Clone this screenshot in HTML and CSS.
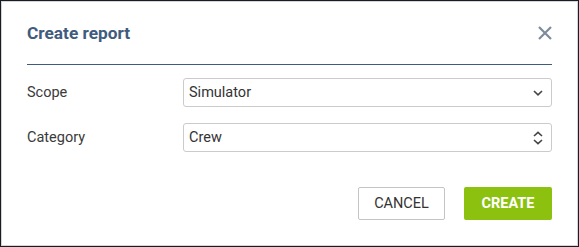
FILE: index.html
```html
<!DOCTYPE html>
<html lang="en">
<head>
  <meta charset="UTF-8">
  <meta name="viewport" content="width=device-width, initial-scale=1.0">
  <title>Create report</title>
  <link rel="stylesheet" href="styles.css">
</head>
<body>
  <div id="dialog">
    <div class="dialog-header">
      <h1>Create report</h1>
      <a href="#" class="close" aria-label="Close">
        <svg width="16" height="16" viewBox="0 0 16 16"><path d="M2 2 L14 14 M14 2 L2 14" stroke="#7d8b9c" stroke-width="2.2" fill="none"/></svg>
      </a>
    </div>

    <div class="dialog-body">
      <div class="field">
        <label for="scope">Scope</label>
        <div class="select-wrap">
          <select id="scope">
            <option>Simulator</option>
          </select>
          <svg class="arrow" width="10" height="6" viewBox="0 0 10 6"><path d="M1 1 L5 4.8 L9 1" stroke="#444" stroke-width="1.6" fill="none"/></svg>
        </div>
      </div>

      <div class="field">
        <label for="category">Category</label>
        <div class="select-wrap">
          <select id="category">
            <option>Crew</option>
          </select>
          <svg class="arrow" width="10" height="14" viewBox="0 0 10 14"><path d="M1 5 L5 1.4 L9 5 M1 9 L5 12.6 L9 9" stroke="#444" stroke-width="1.6" fill="none"/></svg>
        </div>
      </div>
    </div>

    <div class="dialog-footer">
      <a href="#" class="btn btn-cancel">Cancel</a>
      <a href="#" class="btn btn-create">Create</a>
    </div>
  </div>
</body>
</html>
```

FILE: styles.css
```css
html, body {
  margin: 0;
  height: 100%;
}

body {
  font-family: Roboto, "Liberation Sans", Arial, sans-serif;
  background-color: #fff;
}

#dialog {
  box-sizing: border-box;
  width: 579px;
  height: 247px;
  border: 1px solid #1c1c1c;
  box-shadow: inset 0 0 0 1px #cfd6de;
  padding: 0 26px;
  background-color: #fff;
}

.dialog-header {
  display: flex;
  align-items: center;
  justify-content: space-between;
  padding: 20px 0 19px;
  border-bottom: 1px solid #3f5b7d;
}

.dialog-header h1 {
  margin: 0;
  font-size: 17.3px;
  line-height: 24px;
  font-weight: 700;
  color: #3f5b7d;
}

.close {
  display: block;
  width: 16px;
  height: 16px;
  margin-right: -1px;
}

.close svg {
  display: block;
}

.dialog-body {
  padding-top: 13px;
  display: flex;
  flex-direction: column;
  gap: 16px;
}

.field {
  display: flex;
  align-items: center;
}

.field label {
  width: 156px;
  font-size: 14.5px;
  color: #3a3a3a;
}

.select-wrap {
  position: relative;
  flex: 1;
}

.select-wrap select {
  box-sizing: border-box;
  width: 100%;
  height: 29px;
  padding: 0 28px 0 5px;
  border: 1px solid #cbcbcb;
  border-radius: 3px;
  background-color: #fff;
  font-family: inherit;
  font-size: 14.5px;
  color: #333;
  appearance: none;
  -webkit-appearance: none;
  outline: none;
}

.select-wrap .arrow {
  position: absolute;
  right: 9px;
  top: 50%;
  transform: translateY(-50%);
  pointer-events: none;
}

.dialog-footer {
  display: flex;
  justify-content: flex-end;
  gap: 19px;
  margin-top: 35px;
}

.btn {
  box-sizing: border-box;
  display: inline-flex;
  align-items: center;
  justify-content: center;
  height: 33px;
  border-radius: 2px;
  font-size: 14.5px;
  text-transform: uppercase;
  text-decoration: none;
}

.btn-cancel {
  width: 87px;
  border: 1px solid #c4c4c4;
  color: #333;
  background-color: #fff;
}

.btn-create {
  width: 88px;
  background-color: #8cc10f;
  color: #fff;
  font-weight: 700;
}
```
